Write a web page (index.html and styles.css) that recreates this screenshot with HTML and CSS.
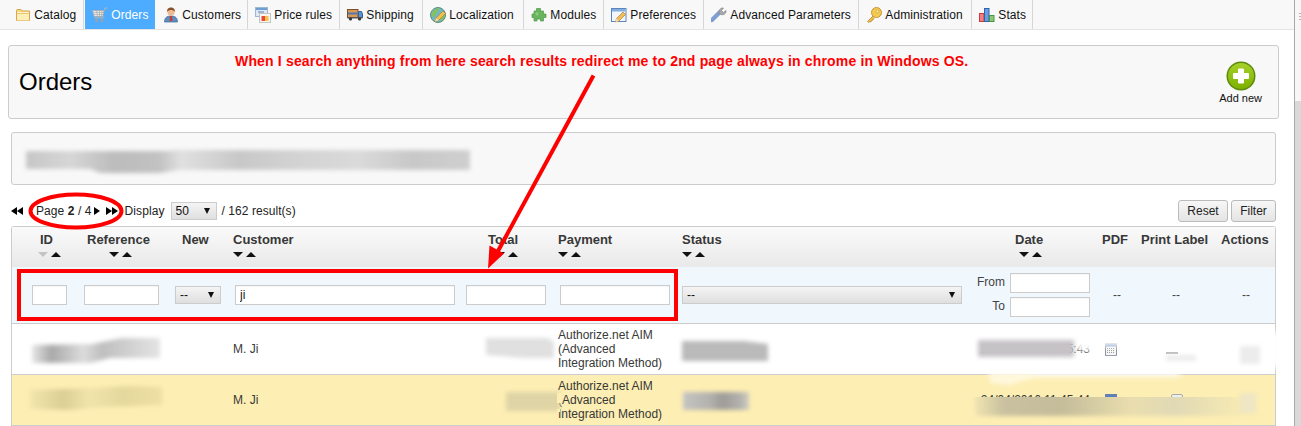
FILE: index.html
```html
<!DOCTYPE html>
<html lang="en">
<head>
<meta charset="utf-8">
<title>Orders</title>
<link rel="stylesheet" href="styles.css">
</head>
<body>
<div class="window">
<div class="page">
  <nav class="nav">
    <a class="tab" href="#"><svg class="ico" viewBox="0 0 16 16"><path d="M1.500 3.500l.5-1h4l1 1.500h7.500v9.500h-13z" fill="#f6d680" stroke="#d9a54e"/><path d="M2 7h12v6.500h-12z" fill="#fcf0b8"/><path d="M2 5.500h12" stroke="#fff6cf"/><path d="M2 6.500h12" stroke="#e9c56e"/></svg>Catalog</a>
    <a class="tab active" href="#"><svg class="ico" viewBox="0 0 16 16"><path d="M0.500 3.500h11.500l-1.200 6h-8.600z" fill="#e9eaea" stroke="#a8a8a8" stroke-width=".8"/><path d="M1.500 5.500h10M2 7.500h9.500M4.500 3.500l1 6M7.500 3.500v6M10 3.500l-.7 6" stroke="#a3a3a3" stroke-width=".6"/><path d="M12 3.500l1-2.500h2.500M2.500 11h8.500l1-1.500" stroke="#b5b5b5" fill="none"/><circle cx="4.500" cy="13.500" r="1.500" fill="#a0a0a0"/><circle cx="10" cy="13.500" r="1.500" fill="#a0a0a0"/></svg>Orders</a>
    <a class="tab" href="#"><svg class="ico" viewBox="0 0 16 16"><path d="M1.500 15c0-4 2-6 6.500-6s6.500 2 6.500 6z" fill="#5b8fc4" stroke="#3f6a99" stroke-width=".7"/><path d="M7 9h2l.5 5h-3z" fill="#d33c2c"/><circle cx="8" cy="5" r="3.600" fill="#eebb8e"/><path d="M4.200 5c-.4-3.500 2-4.500 3.800-4.500s4.200 1 3.800 4.500c-1-1.500-2-2-3.800-2s-2.800.5-3.800 2z" fill="#8a4f22"/></svg>Customers</a>
    <a class="tab" href="#"><svg class="ico" viewBox="0 0 16 16"><rect x=".5" y=".5" width="12" height="9" fill="#dfe9f5" stroke="#9db6d3"/><rect x="1" y="1" width="11" height="2" fill="#6f9ed3"/><path d="M3 5h6" stroke="#5a7fae"/><rect x="4.500" y="6.500" width="11" height="9" fill="#f9f6ee" stroke="#c4c4c4"/><rect x="6.500" y="9" width="4.500" height="5" fill="#e8483c"/><rect x="10" y="9" width="3.500" height="5" fill="#f6c04e"/></svg>Price rules</a>
    <a class="tab" href="#"><svg class="ico" viewBox="0 0 16 16"><rect x=".5" y="2.500" width="10.500" height="8" fill="#d99a57" stroke="#7b5128"/><path d="M1 6.500h9.500" stroke="#4e79b0" stroke-width="2"/><path d="M11.500 4.500h3l1 2.500v3.500h-4z" fill="#5c93d2" stroke="#36618f"/><rect x=".5" y="10" width="15" height="1.500" fill="#555"/><circle cx="3.500" cy="12" r="1.600" fill="#333"/><circle cx="12.500" cy="12" r="1.600" fill="#333"/></svg>Shipping</a>
    <a class="tab" href="#"><svg class="ico" viewBox="0 0 16 16"><circle cx="8" cy="8" r="7.500" fill="#6fb8c9" stroke="#5d8f6c"/><path d="M2 6c2-4 5-5 8-4.500-1 2-3 2-3 4s-2 1-2 3-2 2-3 0zM11 9c2-1 3-1 4-1-.5 3-2 5-4 6z" fill="#86c25a"/><path d="M5 14.500l1-3.500 7-7 2.500 2.500-7 7z" fill="#f2c04f" stroke="#a9772b" stroke-width=".6"/><path d="M5 14.500l1-3.500 2.500 2.500z" fill="#f4dcb5"/></svg>Localization</a>
    <a class="tab" href="#"><svg class="ico" viewBox="0 0 16 16"><path d="M5.500 1.500h4v2.500h3v3h2.500v3.500h-2.500v3.500h-3v-2h-3.500v2h-3v-3.500h-2v-3.500h2v-3h2.500z" fill="#69b55d" stroke="#4f9a48" stroke-width=".7"/><path d="M4 6l2-1 2 2-2 2z" fill="#8ecb7e"/></svg>Modules</a>
    <a class="tab" href="#"><svg class="ico" viewBox="0 0 16 16"><rect x=".5" y="1.500" width="14.500" height="13" fill="#f3f7fc" stroke="#5a86bd"/><rect x="1" y="2" width="13.500" height="2.500" fill="#84aedd"/><path d="M4.500 15l1-3.500 6.500-6.500 2.500 2.500-6.500 6.500z" fill="#f0bd55" stroke="#a5752e" stroke-width=".6"/><path d="M4.500 15l1-3.500 2.500 2.500z" fill="#f6dfba"/></svg>Preferences</a>
    <a class="tab" href="#"><svg class="ico" viewBox="0 0 16 16"><path d="M1 13l7.500-7.500" stroke="#7f9fd4" stroke-width="4.200" stroke-linecap="round"/><path d="M8 6.500c-.8-3 1.200-6 4.500-5.500l-2 2.500 2 2 2.500-2c.5 3-2.500 5-5 4z" fill="#a9a9ad" stroke="#7d7d82" stroke-width=".6"/></svg>Advanced Parameters</a>
    <a class="tab" href="#"><svg class="ico" viewBox="0 0 16 16"><path d="M7 9l-5.500 5.500 1 1 1.500-1 1 .5.500-1.500 1.500-.5.500-1.500 1-.5" fill="#f0bf4c" stroke="#b07f23" stroke-width=".7"/><circle cx="10.500" cy="5.500" r="5" fill="#f4c94f" stroke="#b88521" stroke-width=".8"/><circle cx="11.500" cy="4.500" r="1.400" fill="#fff1b5" stroke="#c0912d" stroke-width=".6"/></svg>Administration</a>
    <a class="tab" href="#"><svg class="ico" viewBox="0 0 16 16"><rect x=".5" y="6.500" width="4.500" height="8" fill="#ee8080" stroke="#c93c3c"/><rect x="5.500" y="1.500" width="4.500" height="13" fill="#6c9de0" stroke="#2f62b1"/><rect x="10.500" y="8.500" width="4.500" height="6" fill="#8cc77a" stroke="#4b9540"/></svg>Stats</a>
  </nav>

  <header class="panel title-panel">
    <h1 class="title">Orders</h1>
    <a class="add-new" href="#">
      <svg class="add-ico" viewBox="0 0 30 30"><defs><linearGradient id="addg" x1="0" y1="0" x2="0" y2="1"><stop offset="0" stop-color="#a6d22a"/><stop offset="1" stop-color="#7cb000"/></linearGradient></defs><circle cx="15" cy="15" r="14.500" fill="#5f8a0c"/><circle cx="15" cy="15" r="13" fill="url(#addg)"/><path d="M12.500 8h5v4.500h5v5h-5v4.500h-5v-4.500h-5v-5h5z" fill="#fff" stroke="#fff" stroke-linejoin="round"/></svg>
      <span>Add new</span>
    </a>
  </header>

  <div class="panel notice"></div>

  <div class="toolbar">
    <div class="pager">
      <span class="skip"><i class="tri-l"></i><i class="tri-l"></i></span>
      <span class="page-text">Page <b>2</b> / 4</span>
      <i class="tri-r one"></i>
      <span class="skip two"><i class="tri-r"></i><i class="tri-r"></i></span>
      <span class="display">Display</span>
      <span class="sel sel-page"><select><option>50</option></select></span>
      <span class="results">/ 162 result(s)</span>
    </div>
    <div class="actions">
      <button class="btn btn-reset">Reset</button>
      <button class="btn btn-filter">Filter</button>
    </div>
  </div>

  <table class="orders">
    <colgroup>
      <col class="c-id"><col class="c-ref"><col class="c-new"><col class="c-cust"><col class="c-total"><col class="c-pay"><col class="c-status"><col class="c-date"><col class="c-pdf"><col class="c-label"><col class="c-act">
    </colgroup>
    <thead>
      <tr class="head">
        <th>ID<div class="sort"><i class="down off"></i><i class="up"></i></div></th>
        <th>Reference<div class="sort s-ref"><i class="down"></i><i class="up"></i></div></th>
        <th>New</th>
        <th>Customer<div class="sort"><i class="down"></i><i class="up"></i></div></th>
        <th>Total<div class="sort s-total"><i class="down"></i><i class="up"></i></div></th>
        <th>Payment<div class="sort"><i class="down"></i><i class="up"></i></div></th>
        <th>Status<div class="sort"><i class="down"></i><i class="up"></i></div></th>
        <th>Date<div class="sort s-date"><i class="down"></i><i class="up"></i></div></th>
        <th>PDF</th>
        <th>Print Label</th>
        <th>Actions</th>
      </tr>
      <tr class="filters">
        <td><input class="in w-id" type="text"></td>
        <td><input class="in w-ref" type="text"></td>
        <td><span class="sel sel-new"><select><option>--</option></select></span></td>
        <td><input class="in w-cust" type="text" value="ji"></td>
        <td><input class="in w-total" type="text"></td>
        <td><input class="in w-pay" type="text"></td>
        <td><span class="sel sel-status"><select><option>--</option></select></span></td>
        <td>
          <div class="range"><label>From</label><input class="in w-date" type="text"></div>
          <div class="range"><label>To</label><input class="in w-date" type="text"></div>
        </td>
        <td class="dash">--</td>
        <td class="dash">--</td>
        <td class="dash">--</td>
      </tr>
    </thead>
    <tbody>
      <tr class="row">
        <td></td><td></td><td></td>
        <td>M. Ji</td>
        <td></td>
        <td class="pay-cell">Authorize.net AIM (Advanced Integration Method)</td>
        <td></td>
        <td class="date-cell">24/04/2016 11:45:43</td>
        <td><svg class="pdf" viewBox="0 0 12 13"><rect x=".5" y=".5" width="11" height="12" fill="#f4f4f4" stroke="#8a8fa0"/><rect x="1" y="1" width="10" height="2.500" fill="#6f8fc4"/><path d="M2 5.500h8M2 7.500h8M2 9.500h8" stroke="#9a9a9a" stroke-dasharray="1 1"/></svg></td>
        <td></td><td></td>
      </tr>
      <tr class="row hl">
        <td></td><td></td><td></td>
        <td>M. Ji</td>
        <td></td>
        <td class="pay-cell">Authorize.net AIM (Advanced Integration Method)</td>
        <td></td>
        <td class="date-cell">24/04/2016 11:45:44</td>
        <td><svg class="pdf" viewBox="0 0 12 13"><rect x=".5" y=".5" width="11" height="12" fill="#f4f4f4" stroke="#6c7fa8"/><rect x="1" y="1" width="10" height="4" fill="#5b7fc0"/></svg></td>
        <td><span class="print"></span></td><td></td>
      </tr>
    </tbody>
  </table>

  <svg class="overlay" viewBox="0 0 1301 426" aria-hidden="true">
    <defs>
      <filter id="b2" x="-20%" y="-50%" width="140%" height="200%"><feGaussianBlur stdDeviation="2"/></filter>
      <filter id="b3" x="-20%" y="-60%" width="140%" height="220%"><feGaussianBlur stdDeviation="3"/></filter>
      <clipPath id="below397"><rect x="960" y="397" width="320" height="28"/></clipPath>
      <linearGradient id="gn" x1="0" x2="1" y1="0" y2="0"><stop offset="0" stop-color="#c6c6c6"/><stop offset=".1" stop-color="#d6d6d6"/><stop offset=".2" stop-color="#bcbcbc"/><stop offset=".3" stop-color="#c2c2c2"/><stop offset=".35" stop-color="#e0e0e0"/><stop offset=".48" stop-color="#c8c8c8"/><stop offset=".6" stop-color="#d2d2d2"/><stop offset=".75" stop-color="#dadada"/><stop offset=".87" stop-color="#c8c8c8"/><stop offset="1" stop-color="#cfcfcf"/></linearGradient>
      <linearGradient id="gr1" x1="0" x2="1" y1="0" y2="0"><stop offset="0" stop-color="#e6e6e6"/><stop offset=".15" stop-color="#a9a9a9"/><stop offset=".4" stop-color="#dcdcdc"/><stop offset=".55" stop-color="#bfbfbf"/><stop offset="1" stop-color="#e4e4e4"/></linearGradient>
      <linearGradient id="gs" x1="0" x2="1" y1="0" y2="0"><stop offset="0" stop-color="#c4c4c2"/><stop offset=".4" stop-color="#b4b2ae"/><stop offset=".6" stop-color="#9e9c98"/><stop offset=".85" stop-color="#b2b0ac"/><stop offset="1" stop-color="#cfccc0"/></linearGradient>
      <linearGradient id="gy1" x1="0" x2="1" y1="0" y2="0"><stop offset="0" stop-color="#f2e5ad"/><stop offset=".25" stop-color="#dccf95"/><stop offset=".45" stop-color="#f1e4ab"/><stop offset=".7" stop-color="#e5d89d"/><stop offset="1" stop-color="#eee0a5"/></linearGradient>
      <linearGradient id="gd2" x1="0" x2="1" y1="0" y2="0"><stop offset="0" stop-color="#f0e4b0"/><stop offset=".1" stop-color="#c9c1a0"/><stop offset=".3" stop-color="#c4bc9a"/><stop offset=".55" stop-color="#e9deae"/><stop offset=".7" stop-color="#e0d9b5"/><stop offset="1" stop-color="#fdeeb3"/></linearGradient>
    </defs>
    <path d="M26 151h140l12-1h292v20h-290l-20 3-60 0-10-4h-64z" fill="url(#gn)" filter="url(#b2)"/>

    <path d="M32 345l60-1 30-6h38v20h-50l-20 5h-58z" fill="url(#gr1)" filter="url(#b2)"/>
    <path d="M486 338h62l6 4v16h-30l-38-3z" fill="#e0e0e0" filter="url(#b2)"/>
    <path d="M682 341h62l24 3v17h-86z" fill="#bababa" filter="url(#b2)"/>
    <path d="M1096 332h185v14h-185zM1076 334h22v17h-22zM1130 346h151v22h-151zM990 359h190v17h-190z" fill="#fff" filter="url(#b3)"/>
    <path d="M990 375l50 0-30 10-20-2z" fill="#fff8dc" filter="url(#b2)"/>
    <path d="M978 340h96v17h-96z" fill="#c6c3c6" filter="url(#b2)"/>
    <path d="M1166 352h12v2h-12z" fill="#bbb"/>
    <path d="M1166 355h30v6h-30zM1240 346h20v18h-20z" fill="#ececec" filter="url(#b2)"/>

    <path d="M30 390l60-2 40-2 32 1v18l-60 2-30 3-42-1z" fill="url(#gy1)" filter="url(#b2)"/>
    <path d="M506 392h54v19h-54z" fill="#dfd4a6" filter="url(#b2)"/>
    <path d="M683 392h66v18h-66z" fill="url(#gs)" filter="url(#b2)"/>
    <g clip-path="url(#below397)"><path d="M975 392h285v24h-285z" fill="url(#gd2)" filter="url(#b2)"/></g>
    <rect x="1240" y="393" width="16" height="20" fill="#eee6c4" filter="url(#b2)"/>
    <rect x="557" y="393" width="5" height="10" fill="#fdeeb3"/>
    <rect x="557" y="409" width="3" height="3" fill="#fdeeb3"/>

    <ellipse cx="76" cy="211" rx="45.500" ry="16.500" fill="none" stroke="#f00" stroke-width="4"/>
    <rect x="19" y="271" width="657" height="48" fill="none" stroke="#f00" stroke-width="4"/>
    <path d="M593.500 75.500L498 251" stroke="#f00" stroke-width="4" fill="none"/>
    <path d="M488 268.500l1.500-23 14.500 8z" fill="#f00"/>
  </svg>
  <p class="callout">When I search anything from here search results redirect me to 2nd page always in chrome in Windows OS.</p>
</div>
<aside class="scrollbar"><div class="thumb"></div></aside>
</div>
</body>
</html>
```
FILE: styles.css
```css
* { box-sizing: border-box; }
html, body { margin: 0; padding: 0; height: 426px; overflow: hidden; background: #fff; }
body { font: 12px/14px "Liberation Sans", Arial, sans-serif; color: #222; }
a { color: inherit; text-decoration: none; }

.window { display: flex; width: 1301px; height: 426px; }
.page { position: relative; width: 1294px; flex: none; }

.scrollbar { flex: 1; border-left: 1px solid #a9a9a9; background: #d9d9d9; }
.thumb { position: relative; height: 101px; background: #f8f7f6; }
.thumb::after { content: ""; position: absolute; right: 0; top: 13px; width: 2px; height: 7px; background: repeating-linear-gradient(#b5b5b5 0 1px, transparent 1px 3px); }

.nav { display: flex; height: 30px; padding-left: 8px; background: #f8f8f8; border-bottom: 1px solid #e4e4e4; }
.tab { display: flex; align-items: center; flex: none; height: 29px; padding-left: 7px; border-right: 1px solid #d6d6d6; color: #111; white-space: nowrap; letter-spacing: .1px; }
.tab:nth-child(1) { width: 76px; }
.tab:nth-child(2) { width: 71px; }
.tab:nth-child(3) { width: 92px; }
.tab:nth-child(4) { width: 92px; }
.tab:nth-child(5) { width: 83px; }
.tab:nth-child(6) { width: 101px; }
.tab:nth-child(7) { width: 80px; }
.tab:nth-child(8) { width: 100px; }
.tab:nth-child(9) { width: 155px; }
.tab:nth-child(10) { width: 113px; }
.tab:nth-child(11) { width: 61px; }
.tab.active { margin-left: 1px; background: #4dacff; color: #fff; border-right-color: transparent; background-clip: padding-box; }
.ico { width: 16px; height: 16px; margin-right: 3.300px; flex: none; }

.panel { background: #f8f8f8; border: 1px solid #ccc; border-radius: 3px; }
.title-panel { display: flex; justify-content: space-between; align-items: center; width: 1271px; height: 74px; margin: 15px 0 0 8px; padding: 0 16px 0 10px; }
.title { margin: 0; font-size: 24px; line-height: 28px; font-weight: 400; color: #000; }
.add-new { display: flex; flex-direction: column; align-items: center; font-size: 11px; line-height: 13px; color: #111; padding-top: 1px; }
.add-ico { width: 30px; height: 30px; margin-bottom: 1px; }
.notice { width: 1265px; height: 53px; margin: 13px 0 0 11px; }

.toolbar { display: flex; justify-content: space-between; align-items: center; width: 1265px; height: 22px; margin: 15px 0 0 11px; }
.pager { display: flex; align-items: center; }
.skip { display: inline-flex; }
.tri-l, .tri-r { display: block; width: 0; height: 0; border-top: 4.500px solid transparent; border-bottom: 4.500px solid transparent; }
.tri-l { border-right: 6px solid #000; }
.tri-r { border-left: 6px solid #000; }
.page-text { margin-left: 13px; letter-spacing: .08px; }
.tri-r.one { margin-left: 2px; }
.skip.two { margin-left: 6px; }
.display { margin-left: 7px; letter-spacing: .1px; }
.results { margin-left: 5px; letter-spacing: .05px; }

.sel { position: relative; display: inline-block; }
.sel select { display: block; width: 100%; height: 100%; padding: 0 0 0 4px; appearance: none; -webkit-appearance: none; border: 1px solid #ccc; border-radius: 0; background: linear-gradient(#f4f4f4, #dfdfdf); font: 12px "Liberation Sans", Arial, sans-serif; color: #111; }
.sel::after { content: ""; position: absolute; top: 50%; right: 7px; margin-top: -3px; border-left: 3px solid transparent; border-right: 3px solid transparent; border-top: 6px solid #111; }
.sel-page { width: 46px; height: 18px; margin-left: 6px; }
.sel-new { width: 46px; height: 18px; }
.sel-status { width: 280px; height: 18px; }

.actions { display: flex; gap: 3px; }
.btn { height: 22px; padding: 0; border: 1px solid #bbb; border-radius: 3px; background: linear-gradient(#f7f7f7, #e4e4e4); font: 12px "Liberation Sans", Arial, sans-serif; color: #222; }
.btn-reset { width: 50px; }
.btn-filter { width: 45px; }

.orders { display: table; margin: 4px 0 0 11px; width: 1265px; table-layout: fixed; border-collapse: separate; border-spacing: 0; border: 1px solid #ccc; border-bottom: 0; border-radius: 3px 3px 0 0; }
.c-id { width: 66px; } .c-ref { width: 92px; } .c-new { width: 58px; } .c-cust { width: 233px; }
.c-total { width: 92px; } .c-pay { width: 124px; } .c-status { width: 290px; } .c-date { width: 130px; }
.c-pdf { width: 38px; } .c-label { width: 80px; } .c-act { width: 60px; }

.head { height: 40px; background: linear-gradient(#fafafa, #e9e9e9); }
.head th { padding: 6px 0 0 5px; vertical-align: top; text-align: left; font-size: 13px; line-height: 14px; font-weight: 700; color: #383838; white-space: nowrap; }
.head th:nth-child(1) { padding-left: 28px; }
.head th:nth-child(2) { padding-left: 9px; }
.head th:nth-child(3) { padding-left: 12px; }
.head th:nth-child(5) { padding-left: 27px; }
.head th:nth-child(8) { padding-left: 48px; }
.head th:nth-child(10), .head th:nth-child(11) { padding-left: 6px; }

.sort { display: flex; gap: 3px; margin-top: 5px; }
.sort i { display: block; width: 0; height: 0; border-left: 5px solid transparent; border-right: 5px solid transparent; }
.sort .down { border-top: 5.500px solid #111; }
.sort .up { border-bottom: 5.500px solid #111; }
.sort .down.off { border-top-color: #c4c4c4; }
.s-ref { margin-left: 22px; }
.s-total { margin-left: 7px; }
.s-date { margin-left: 4px; }
.head th:nth-child(1) .sort { margin-left: -2px; }

.filters { height: 57px; background: #f0f7fd; }
.filters td { padding: 0 0 0 5px; border-bottom: 1px solid #ccc; vertical-align: middle; }
.filters td:nth-child(1) { padding-left: 20px; }
.filters td:nth-child(2) { padding-left: 6px; }
.filters td:nth-child(4), .filters td:nth-child(6) { padding-left: 7px; }
.filters td:nth-child(8) { padding-left: 0; }
.in { display: block; height: 20px; padding: 0 4px; border: 1px solid #ccc; background: #fff; font: 12px "Liberation Sans", Arial, sans-serif; color: #222; box-shadow: inset 0 1px 1px rgba(0,0,0,.04); }
.w-id { width: 35px; } .w-ref { width: 75px; } .w-cust { width: 220px; } .w-total { width: 80px; } .w-pay { width: 110px; } .w-date { width: 80px; }
.filters .sel { display: block; }
.range { display: flex; justify-content: flex-end; align-items: center; gap: 5px; padding-right: 7px; height: 20px; color: #444; }
.range label { margin-bottom: 2px; }
.range + .range { margin-top: 4px; }
td.dash { padding-left: 2px; text-align: center; color: #444; }

.row { height: 51px; background: #fff; }
.row td { padding: 0 0 0 5px; border-bottom: 1px solid #ccc; vertical-align: middle; color: #383838; }
.row td.pay-cell { padding-right: 12px; }
.row.hl { background: #fdeeb3; }
.row td.date-cell { white-space: nowrap; text-align: right; padding-right: 7px; }
.pdf { display: block; width: 12px; height: 13px; margin-left: 3px; }
.print { display: block; width: 12px; height: 12px; margin-left: 31px; background: #eee; border: 1px solid #aaa; border-radius: 2px; }

.overlay { position: absolute; left: 0; top: 0; width: 1301px; height: 426px; pointer-events: none; }
.callout { position: absolute; left: 235px; top: 53px; margin: 0; font-size: 14px; line-height: 16px; font-weight: 700; color: #f00; white-space: nowrap; letter-spacing: .165px; }
```
